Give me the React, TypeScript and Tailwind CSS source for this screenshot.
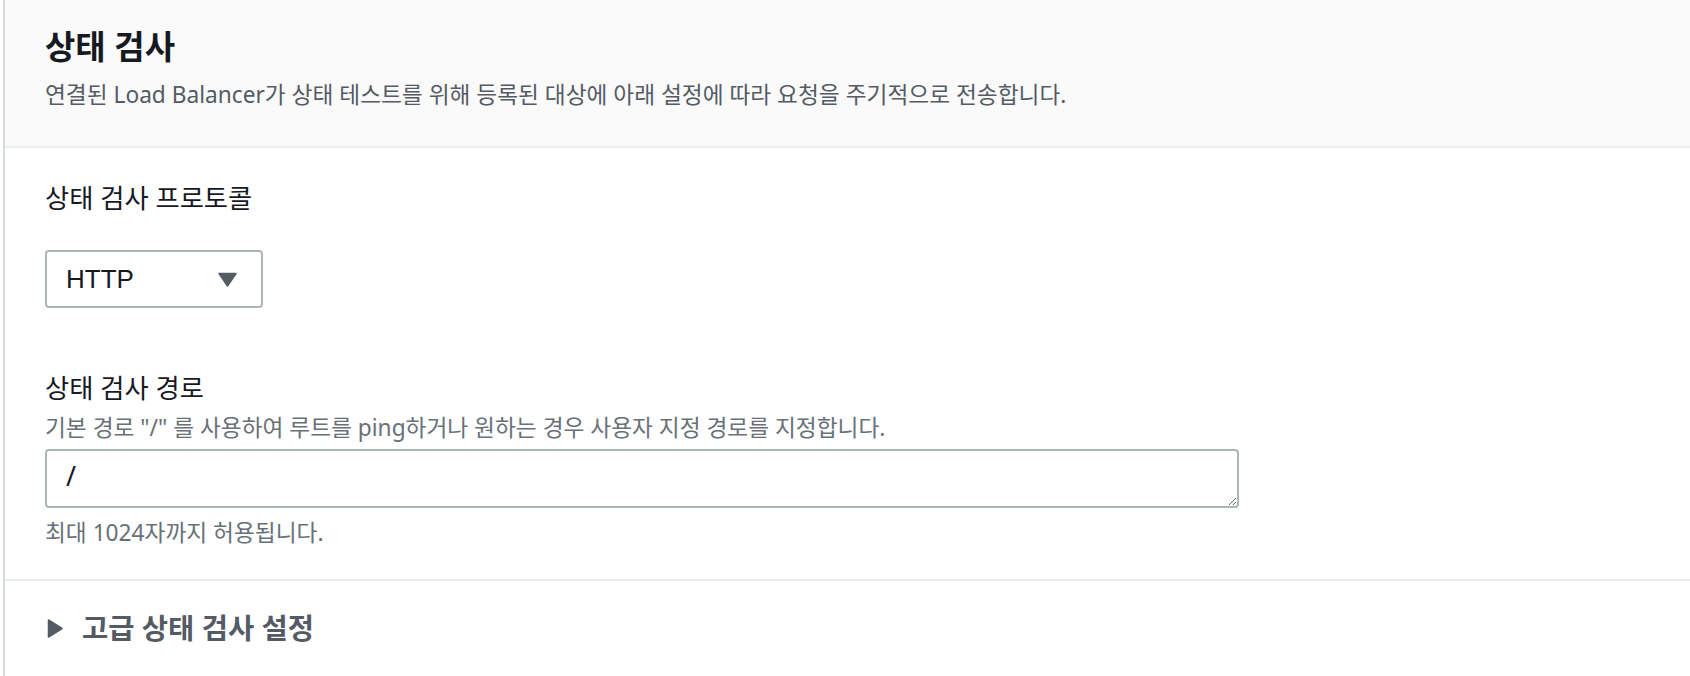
import { useState } from 'react';

function CaretDown() {
  return (
    <svg width="19" height="15" viewBox="0 0 19 15" className="shrink-0">
      <path d="M1 1.5 L18 1.5 L9.5 14 Z" fill="#545b64" stroke="#545b64" strokeWidth="1.5" strokeLinejoin="round" />
    </svg>
  );
}

function CaretRight() {
  return (
    <svg width="16" height="19" viewBox="0 0 16 19" className="shrink-0">
      <path d="M1.5 1 L15 9.5 L1.5 18 Z" fill="#545b64" stroke="#545b64" strokeWidth="1.5" strokeLinejoin="round" />
    </svg>
  );
}

export default function App() {
  const [path, setPath] = useState('/');

  return (
    <div className="min-h-screen bg-white pl-[3px] font-['Noto_Sans','Noto_Sans_CJK_KR',sans-serif] text-[#16191f]">
      <div className="min-h-[676px] border-l-2 border-[#d5dbdb]">
        <div className="h-[148px] border-b-2 border-[#eaeded] bg-[#fafafa] pl-[40px] pt-[27px]">
          <h2 className="text-[33px] leading-[40px] font-bold">상태 검사</h2>
          <p className="mt-[14px] text-[22.7px] leading-[28px] text-[#545b64]">
            연결된 Load Balancer가 상태 테스트를 위해 등록된 대상에 아래 설정에 따라 요청을 주기적으로 전송합니다.
          </p>
        </div>

        <div className="pl-[40px] pt-[34px] pb-[32px]">
          <label className="block text-[26.3px] leading-[32px]">상태 검사 프로토콜</label>
          <div className="mt-[36px] flex h-[58px] w-[218px] items-center justify-between rounded-[4px] border-2 border-[#aab7b8] bg-white pl-[19px] pr-[24px]">
            <span className="font-['Liberation_Sans','Noto_Sans',sans-serif] text-[26px] leading-[34px]">HTTP</span>
            <CaretDown />
          </div>

          <label className="mt-[64px] block text-[26.3px] leading-[32px]">상태 검사 경로</label>
          <p className="mt-[10px] text-[22.7px] leading-[28px] text-[#687078]">
            기본 경로 "/" 를 사용하여 루트를 ping하거나 원하는 경우 사용자 지정 경로를 지정합니다.
          </p>
          <textarea
            value={path}
            onChange={(e) => setPath(e.target.value)}
            className="mt-[7px] block h-[59px] w-[1194px] rounded-[4px] border-2 border-[#aab7b8] bg-white pl-[19px] pt-[8px] text-[27px] leading-[34px] text-[#16191f] outline-none"
          />
          <p className="mt-[11px] text-[22.7px] leading-[28px] text-[#687078]">최대 1024자까지 허용됩니다.</p>
        </div>

        <div className="border-t-2 border-[#eaeded] pl-[42px] pt-[31px]">
          <div className="flex items-center gap-[19px] text-[#545b64]">
            <CaretRight />
            <span className="text-[28.5px] leading-[32px] font-bold">고급 상태 검사 설정</span>
          </div>
        </div>
      </div>
    </div>
  );
}
